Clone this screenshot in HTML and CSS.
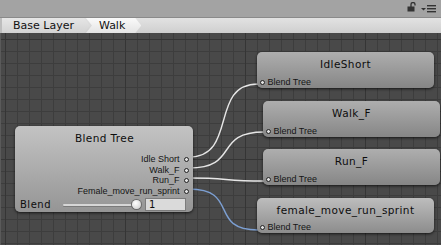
FILE: index.html
```html
<!DOCTYPE html>
<html lang="en">
  <head>
    <meta charset="UTF-8" />
    <title>Animator</title>
    <link rel="stylesheet" href="styles.css">
  </head>
  <body>
    <div class="toolbar">
      <svg class="lock" width="10" height="10" viewBox="0 0 10 10">
        <path d="M4 5 V2.5 a2 2 0 0 1 4 0 V3.5" fill="none" stroke="#333" stroke-width="1.3" />
        <rect x="0.5" y="4.5" width="7" height="5" fill="#333" />
      </svg>
      <svg class="menu" width="16" height="8" viewBox="0 0 16 8">
        <path d="M0 3 H5 L2.5 5.5 Z" fill="#333" />
        <rect x="6" y="0" width="9" height="1.4" fill="#333" />
        <rect x="6" y="3" width="9" height="1.4" fill="#333" />
        <rect x="6" y="6" width="9" height="1.4" fill="#333" />
      </svg>
    </div>
    <div class="crumbs">
      <span class="crumb">Base Layer</span>
      <span class="crumb active">Walk</span>
    </div>
    <div class="graph">
      <svg class="wires" width="441" height="212" viewBox="0 0 441 212">
        <path d="M189 124 C238 124, 209 51, 258 51" class="wire" />
        <path d="M189 135 C240 135, 213 99, 264 99" class="wire" />
        <path d="M189 145 C230 145, 222 148, 264 148" class="wire" />
        <path d="M189 156 C240 156, 208 197, 258 197" class="wire blue" />
      </svg>

      <div class="node tree">
        <div class="title">Blend Tree</div>
        <div class="outputs">
          <div class="port-row">Idle Short <i class="port"></i></div>
          <div class="port-row">Walk_F <i class="port"></i></div>
          <div class="port-row">Run_F <i class="port"></i></div>
          <div class="port-row">Female_move_run_sprint <i class="port"></i></div>
        </div>
        <div class="param">
          <span class="param-name">Blend</span>
          <div class="slider"><span class="knob"></span></div>
          <div class="field">1</div>
        </div>
      </div>

      <div class="node clip" style="left: 256px; top: 19px">
        <div class="title">IdleShort</div>
        <div class="input"><i class="port"></i> Blend Tree</div>
      </div>
      <div class="node clip" style="left: 262px; top: 68px">
        <div class="title">Walk_F</div>
        <div class="input"><i class="port"></i> Blend Tree</div>
      </div>
      <div class="node clip" style="left: 262px; top: 116px">
        <div class="title">Run_F</div>
        <div class="input"><i class="port"></i> Blend Tree</div>
      </div>
      <div class="node clip light" style="left: 256px; top: 165px">
        <div class="title">female_move_run_sprint</div>
        <div class="input"><i class="port"></i> Blend Tree</div>
      </div>
    </div>
  </body>
</html>
```

FILE: styles.css
```css
body {
  margin: 0;
  width: 441px;
  height: 245px;
  overflow: hidden;
  font-family: "DejaVu Sans", sans-serif;
  background-color: #464646;
}

.toolbar {
  height: 17px;
  background-color: #a3a3a3;
  border-bottom: 1px solid #8a8a8a;
  display: flex;
  align-items: center;
  justify-content: flex-end;
  padding-right: 4px;
  gap: 4px;
}

.lock {
  margin-top: -3px;
}

.menu {
  margin-top: 1px;
}

.crumbs {
  height: 15px;
  background: linear-gradient(#e2e2e2, #cfcfcf);
  border-left: 2px solid #bdbdbd;
  display: flex;
  align-items: stretch;
  font-size: 11px;
  color: #111;
}

.crumb {
  display: flex;
  align-items: center;
  padding: 0 16px 0 11px;
  background: linear-gradient(#e6e6e6, #d2d2d2);
  clip-path: polygon(0 0, calc(100% - 6px) 0, 100% 50%, calc(100% - 6px) 100%, 0 100%);
}

.crumb.active {
  margin-left: -4px;
  padding-left: 13px;
  background: linear-gradient(#fafafa, #e4e4e4);
  clip-path: polygon(0 0, calc(100% - 6px) 0, 100% 50%, calc(100% - 6px) 100%, 0 100%, 6px 50%);
}

.graph {
  position: relative;
  height: 212px;
  background-color: #494949;
  border-left: 1px solid #5a5a5a;
  background-image:
    linear-gradient(90deg, #353535 1px, transparent 1px),
    linear-gradient(#353535 1px, transparent 1px),
    linear-gradient(90deg, #3d3d3d 1px, transparent 1px),
    linear-gradient(#3d3d3d 1px, transparent 1px);
  background-size: 120px 120px, 120px 120px, 12px 12px, 12px 12px;
  background-position: 4px 6px, 4px 6px, 4px 6px, 4px 6px;
}

.wires {
  position: absolute;
  left: -1px;
  top: 0;
}

.wire {
  fill: none;
  stroke: #e6e6e6;
  stroke-width: 1.4;
}

.wire.blue {
  stroke: #7c9fd2;
}

.node {
  position: absolute;
  box-sizing: border-box;
  border-radius: 5px;
  box-shadow: 0 1px 3px rgba(0, 0, 0, 0.7);
  color: #0d0d0d;
}

.title {
  text-align: center;
  font-size: 10.5px;
  letter-spacing: 0.4px;
}

.port {
  display: inline-block;
  width: 3px;
  height: 3px;
  border: 1px solid #222;
  border-radius: 50%;
  background-color: #e0e0e0;
  vertical-align: middle;
}

.tree {
  left: 14px;
  top: 93px;
  width: 178px;
  height: 86px;
  background: linear-gradient(#c3c3c3, #959595);
  padding: 6px 4px 0 5px;
}

.outputs {
  margin-top: 10px;
  font-family: "Liberation Sans", sans-serif;
  font-size: 9px;
  line-height: 10.6px;
  text-align: right;
  color: #151515;
}

.port-row .port {
  margin-left: 2px;
}

.param {
  display: flex;
  align-items: center;
  margin-top: 2px;
  height: 13px;
}

.param-name {
  font-size: 10px;
  letter-spacing: 0.5px;
  width: 43px;
}

.slider {
  position: relative;
  width: 74px;
  height: 2px;
  background-color: #d6d6d6;
  border-radius: 1px;
  box-shadow: 0 1px 0 #7a7a7a;
}

.knob {
  position: absolute;
  right: -4px;
  top: -4px;
  width: 9px;
  height: 9px;
  border-radius: 50%;
  background: radial-gradient(circle at 40% 35%, #ffffff, #c8c8c8);
  box-shadow: 0 0 0 1px #6a6a6a;
}

.field {
  margin-left: 8px;
  width: 41px;
  height: 13px;
  box-sizing: border-box;
  background-color: #dadada;
  border: 1px solid #7c7c7c;
  font-size: 10px;
  line-height: 11px;
  padding-left: 3px;
}

.clip {
  width: 177px;
  height: 36px;
  background: linear-gradient(#aeaeae, #868686);
  padding-top: 6px;
  display: flex;
  flex-direction: column;
  justify-content: space-between;
}

.clip.light {
  height: 35px;
  background: linear-gradient(#bdbdbd, #8c8c8c);
}

.input {
  font-family: "Liberation Sans", sans-serif;
  font-size: 9px;
  line-height: 10px;
  padding: 0 0 1px 3px;
  color: #151515;
}
```
